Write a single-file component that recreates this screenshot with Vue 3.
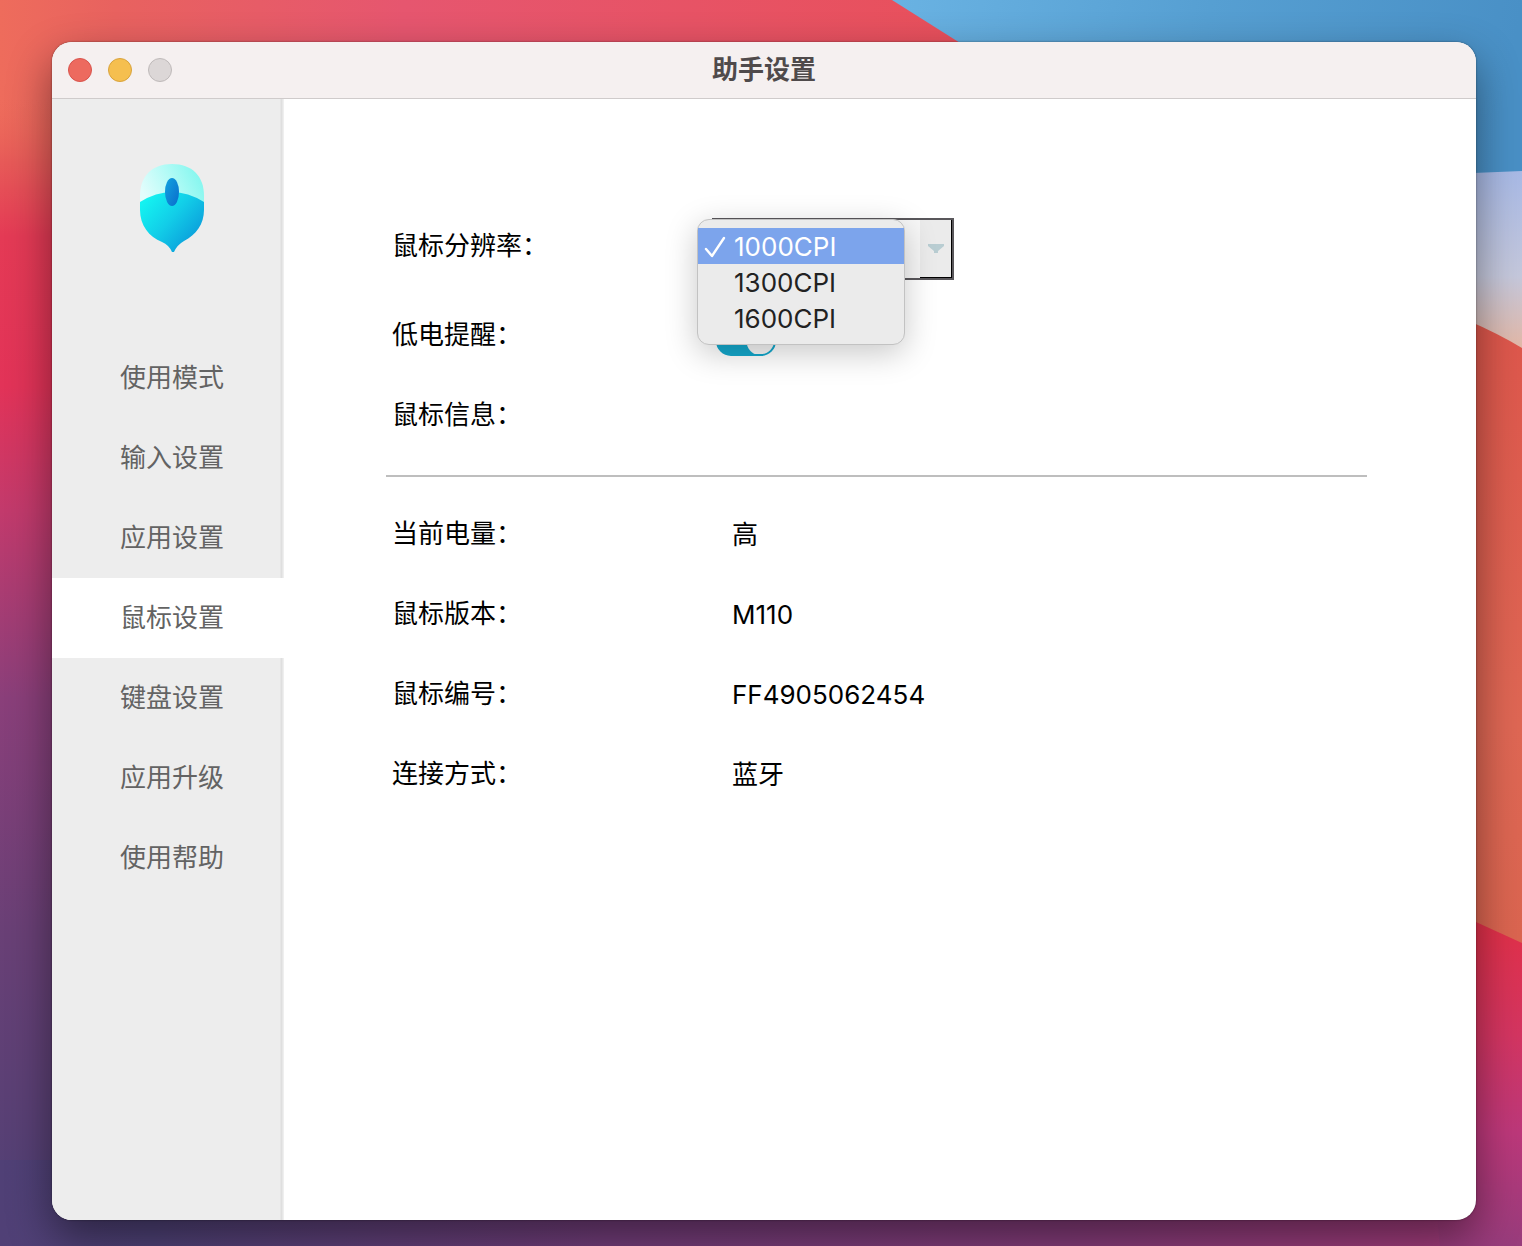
<script setup>
import { ref } from 'vue'

const menu = ['使用模式', '输入设置', '应用设置', '鼠标设置', '键盘设置', '应用升级', '使用帮助']
const active = ref('鼠标设置')
const resolutions = ['1000CPI', '1300CPI', '1600CPI']
const resolution = ref('1000CPI')
const lowBattery = ref(true)
const info = [
  ['当前电量', '高'],
  ['鼠标版本', 'M110'],
  ['鼠标编号', 'FF4905062454'],
  ['连接方式', '蓝牙']
]
</script>

<template>
  <div class="desktop" lang="zh-CN">
    <svg class="wallpaper" viewBox="0 0 1522 1246" preserveAspectRatio="none" aria-hidden="true">
      <defs>
        <linearGradient id="top" x1="0" x2="960" y1="0" y2="0" gradientUnits="userSpaceOnUse">
          <stop offset="0" stop-color="#ee6c5c" />
          <stop offset="0.12" stop-color="#e8625f" />
          <stop offset="0.42" stop-color="#e6566f" />
          <stop offset="1" stop-color="#e8505c" />
        </linearGradient>
        <linearGradient id="left" x1="0" x2="0" y1="0" y2="1246" gradientUnits="userSpaceOnUse">
          <stop offset="0.08" stop-color="#ea6658" stop-opacity="0" />
          <stop offset="0.13" stop-color="#e75a58" />
          <stop offset="0.19" stop-color="#e43a55" />
          <stop offset="0.31" stop-color="#e23358" />
          <stop offset="0.41" stop-color="#c23a6c" />
          <stop offset="0.56" stop-color="#8a3f7a" />
          <stop offset="0.75" stop-color="#694076" />
          <stop offset="1" stop-color="#4e4074" />
        </linearGradient>
        <linearGradient id="bottom" x1="0" x2="1522" y1="0" y2="0" gradientUnits="userSpaceOnUse">
          <stop offset="0" stop-color="#504076" />
          <stop offset="0.1" stop-color="#4f4278" />
          <stop offset="0.4" stop-color="#733d7a" />
          <stop offset="0.7" stop-color="#853c7a" />
          <stop offset="1" stop-color="#a83c7c" />
        </linearGradient>
        <linearGradient id="blue" x1="900" x2="1500" y1="0" y2="120" gradientUnits="userSpaceOnUse">
          <stop offset="0" stop-color="#69b2e2" />
          <stop offset="0.5" stop-color="#569fd2" />
          <stop offset="1" stop-color="#4990c6" />
        </linearGradient>
        <linearGradient id="haze" x1="0" x2="0" y1="172" y2="345" gradientUnits="userSpaceOnUse">
          <stop offset="0" stop-color="#a9bae6" />
          <stop offset="0.6" stop-color="#c5c8dc" />
          <stop offset="1" stop-color="#e2b9aa" />
        </linearGradient>
        <linearGradient id="coral" x1="0" x2="0" y1="325" y2="940" gradientUnits="userSpaceOnUse">
          <stop offset="0" stop-color="#de574c" />
          <stop offset="0.65" stop-color="#df6754" />
          <stop offset="1" stop-color="#db6550" />
        </linearGradient>
        <linearGradient id="crimson" x1="0" x2="0" y1="920" y2="1246" gradientUnits="userSpaceOnUse">
          <stop offset="0" stop-color="#e23048" />
          <stop offset="0.35" stop-color="#d43561" />
          <stop offset="0.65" stop-color="#bd387a" />
          <stop offset="1" stop-color="#983c7c" />
        </linearGradient>
      </defs>
      <rect width="1522" height="1246" fill="url(#top)" />
      <rect y="80" width="700" height="1166" fill="url(#left)" />
      <rect y="1160" width="1522" height="86" fill="url(#bottom)" />
      <path d="M892 0H1522V180H1177Z" fill="url(#blue)" />
      <path d="M1400 176L1522 171V360H1400Z" fill="url(#haze)" />
      <path d="M1400 295Q1476 320 1522 348V960H1400Z" fill="url(#coral)" />
      <path d="M1400 890L1476 922L1522 943V1246H1440Z" fill="url(#crimson)" />
    </svg>

    <div class="window">
      <header class="titlebar">
        <div class="lights">
          <button class="light close" type="button" aria-label="关闭"></button>
          <button class="light minimize" type="button" aria-label="最小化"></button>
          <button class="light zoom" type="button" aria-label="缩放" disabled></button>
        </div>
        <h1>助手设置</h1>
      </header>

      <div class="body">
        <aside class="sidebar">
          <svg class="logo" viewBox="0 0 64 88" aria-hidden="true">
            <defs>
              <linearGradient id="shell" x1="0" x2="1" y1="0.6" y2="0.3">
                <stop offset="0" stop-color="#e2fdfc" />
                <stop offset="0.5" stop-color="#b2fbf6" />
                <stop offset="1" stop-color="#7ff6ee" />
              </linearGradient>
              <linearGradient id="base" x1="0.1" x2="0.9" y1="0.1" y2="0.75">
                <stop offset="0" stop-color="#14f3f1" />
                <stop offset="0.5" stop-color="#12cde8" />
                <stop offset="1" stop-color="#0b9edb" />
              </linearGradient>
              <linearGradient id="wheel" x1="0" x2="1" y1="0" y2="1">
                <stop offset="0" stop-color="#12a4e0" />
                <stop offset="1" stop-color="#0a6ccc" />
              </linearGradient>
            </defs>
            <path d="M0 38V32C0 12 12 0 32 0S64 12 64 32V38Z" fill="url(#shell)" />
            <path d="M0 38Q32 18 64 38V46C64 60 56 71 44 77Q37 81 34 88H32Q29 81 22 78C9 73 0 61 0 46Z" fill="url(#base)" />
            <ellipse cx="32" cy="28" rx="7" ry="14" fill="url(#wheel)" />
          </svg>
          <nav>
            <a
              v-for="item in menu"
              :key="item"
              href="#"
              :class="{ active: item === active }"
              @click.prevent="active = item"
            >{{ item }}</a>
          </nav>
        </aside>

        <main class="content">
          <div class="row resolution">
            <label class="name" for="resolution">鼠标分辨率：</label>
            <div class="combo">
              <select id="resolution" v-model="resolution">
                <option v-for="r in resolutions" :key="r">{{ r }}</option>
              </select>
              <span class="arrow" aria-hidden="true">
                <svg viewBox="0 0 16 10"><path d="M0 0H16V2L10 7V9H6V7L0 2Z" fill="#b9cdd2" /></svg>
              </span>
              <div class="popup" role="listbox" aria-label="鼠标分辨率">
                <button
                  v-for="r in resolutions"
                  :key="r"
                  type="button"
                  role="option"
                  :aria-selected="r === resolution"
                  @click="resolution = r"
                >
                  <svg class="check" viewBox="0 0 22 22" aria-hidden="true">
                    <path v-if="r === resolution" d="M2 13L8 20L20 2" />
                  </svg>
                  <span>{{ r }}</span>
                </button>
              </div>
            </div>
          </div>
          <div class="row">
            <label class="name" for="battery">低电提醒：</label>
            <input id="battery" v-model="lowBattery" class="switch" type="checkbox" />
          </div>
          <h2 class="row">鼠标信息：</h2>
          <hr />
          <dl>
            <div v-for="[name, value] in info" :key="name" class="row">
              <dt class="name">{{ name }}：</dt>
              <dd>{{ value }}</dd>
            </div>
          </dl>
        </main>
      </div>
    </div>
  </div>
</template>

<style>
body {
  margin: 0;
}
</style>

<style scoped>
.desktop {
  position: relative;
  box-sizing: border-box;
  display: flex;
  min-height: 100vh;
  padding: 42px 46px 26px 52px;
  overflow: hidden;
  font-family: Inter, "Noto Sans CJK SC", sans-serif;
  font-size: 26px;
  line-height: 36px;
  color: #000;
}

.wallpaper {
  position: absolute;
  inset: 0;
  width: 100%;
  height: 100%;
}

.window {
  position: relative;
  display: flex;
  flex: 1;
  flex-direction: column;
  border-radius: 20px;
  background: #fff;
  box-shadow: 0 0 2px rgba(0, 0, 0, 0.5), 0 18px 44px rgba(0, 0, 0, 0.45);
}

.titlebar {
  display: grid;
  grid-template-columns: 1fr auto 1fr;
  align-items: center;
  height: 56px;
  border-bottom: 1px solid #cfcbcb;
  border-radius: 20px 20px 0 0;
  background: #f5f0f0;
}

.lights {
  display: flex;
  gap: 16px;
  padding-left: 16px;
}

.light {
  box-sizing: border-box;
  width: 24px;
  height: 24px;
  padding: 0;
  border: 1px solid;
  border-radius: 50%;
}

.close {
  border-color: #d9534c;
  background: #ed6a5f;
}

.minimize {
  border-color: #d9a33c;
  background: #f5bf4f;
}

.zoom {
  border-color: #bfbaba;
  background: #dcd7d7;
}

h1 {
  margin: 0;
  font-size: 26px;
  font-weight: 700;
  color: #4f4a4b;
}

.body {
  display: flex;
  flex: 1;
}

.sidebar {
  display: flex;
  flex: none;
  flex-direction: column;
  width: 232px;
  padding-top: 65px;
  border-bottom-left-radius: 20px;
  background: linear-gradient(to right, #ededed 228px, #dfdfdf 229px, #dfdfdf 230px, #efefef 231px);
}

.logo {
  width: 64px;
  height: 88px;
  margin-left: 88px;
}

nav {
  display: flex;
  flex-direction: column;
  margin-top: 86px;
}

nav a {
  padding-left: 68px;
  line-height: 80px;
  color: #636363;
  text-decoration: none;
}

nav a.active {
  background: #fff;
}

.content {
  flex: 1;
  padding: 107px 109px 40px 102px;
}

.row {
  display: flex;
  align-items: center;
  height: 80px;
  padding-left: 6px;
}

.resolution {
  margin-bottom: 9px;
}

.name {
  flex: none;
  width: 340px;
}

h2 {
  margin: 0;
  font-size: 26px;
  font-weight: 400;
}

.combo {
  position: relative;
  display: flex;
  width: 242px;
  height: 62px;
  margin: 6px 0 0 -20px;
}

select {
  box-sizing: border-box;
  width: 100%;
  padding: 0 40px 0 20px;
  border: 2px solid #59575b;
  border-radius: 0;
  appearance: none;
  background: #f7f7f7;
  font: inherit;
  color: #222;
}

.arrow {
  position: absolute;
  top: 2px;
  right: 2px;
  bottom: 2px;
  box-sizing: border-box;
  display: flex;
  align-items: center;
  justify-content: center;
  width: 32px;
  border-right: 1px solid #000;
  border-bottom: 1px solid #000;
  background: #ebebeb;
  pointer-events: none;
}

.arrow svg {
  width: 16px;
  height: 10px;
}

.popup {
  position: absolute;
  z-index: 1;
  top: 1px;
  left: -15px;
  box-sizing: border-box;
  width: 208px;
  padding: 8px 0;
  border: 1px solid #c2c2c2;
  border-radius: 12px;
  background: #ebebeb;
  box-shadow: 0 8px 32px rgba(0, 0, 0, 0.22);
}

.popup button {
  display: flex;
  gap: 8px;
  align-items: center;
  width: 100%;
  height: 36px;
  padding: 2px 6px 0;
  border: 0;
  background: none;
  font: inherit;
  color: #222;
}

.popup button[aria-selected="true"] {
  background: #7ca4ec;
  color: #fff;
}

.check {
  width: 22px;
  height: 22px;
  fill: none;
  stroke: currentColor;
  stroke-width: 2.4;
  stroke-linecap: round;
  stroke-linejoin: round;
}

.switch {
  box-sizing: border-box;
  width: 60px;
  height: 30px;
  margin: 12px 0 0 -16px;
  border: 2px solid #14a8cc;
  border-radius: 15px;
  appearance: none;
  background: #f2f2f2;
}

.switch:checked {
  background: radial-gradient(circle at 43px 13px, #f6f6f6 14px, #14a8cc 15px);
}

hr {
  height: 2px;
  margin: 20px 0 17px;
  border: 0;
  background: #bebebe;
}

dl,
dd {
  margin: 0;
}

dd {
  padding-top: 2px;
}
</style>
